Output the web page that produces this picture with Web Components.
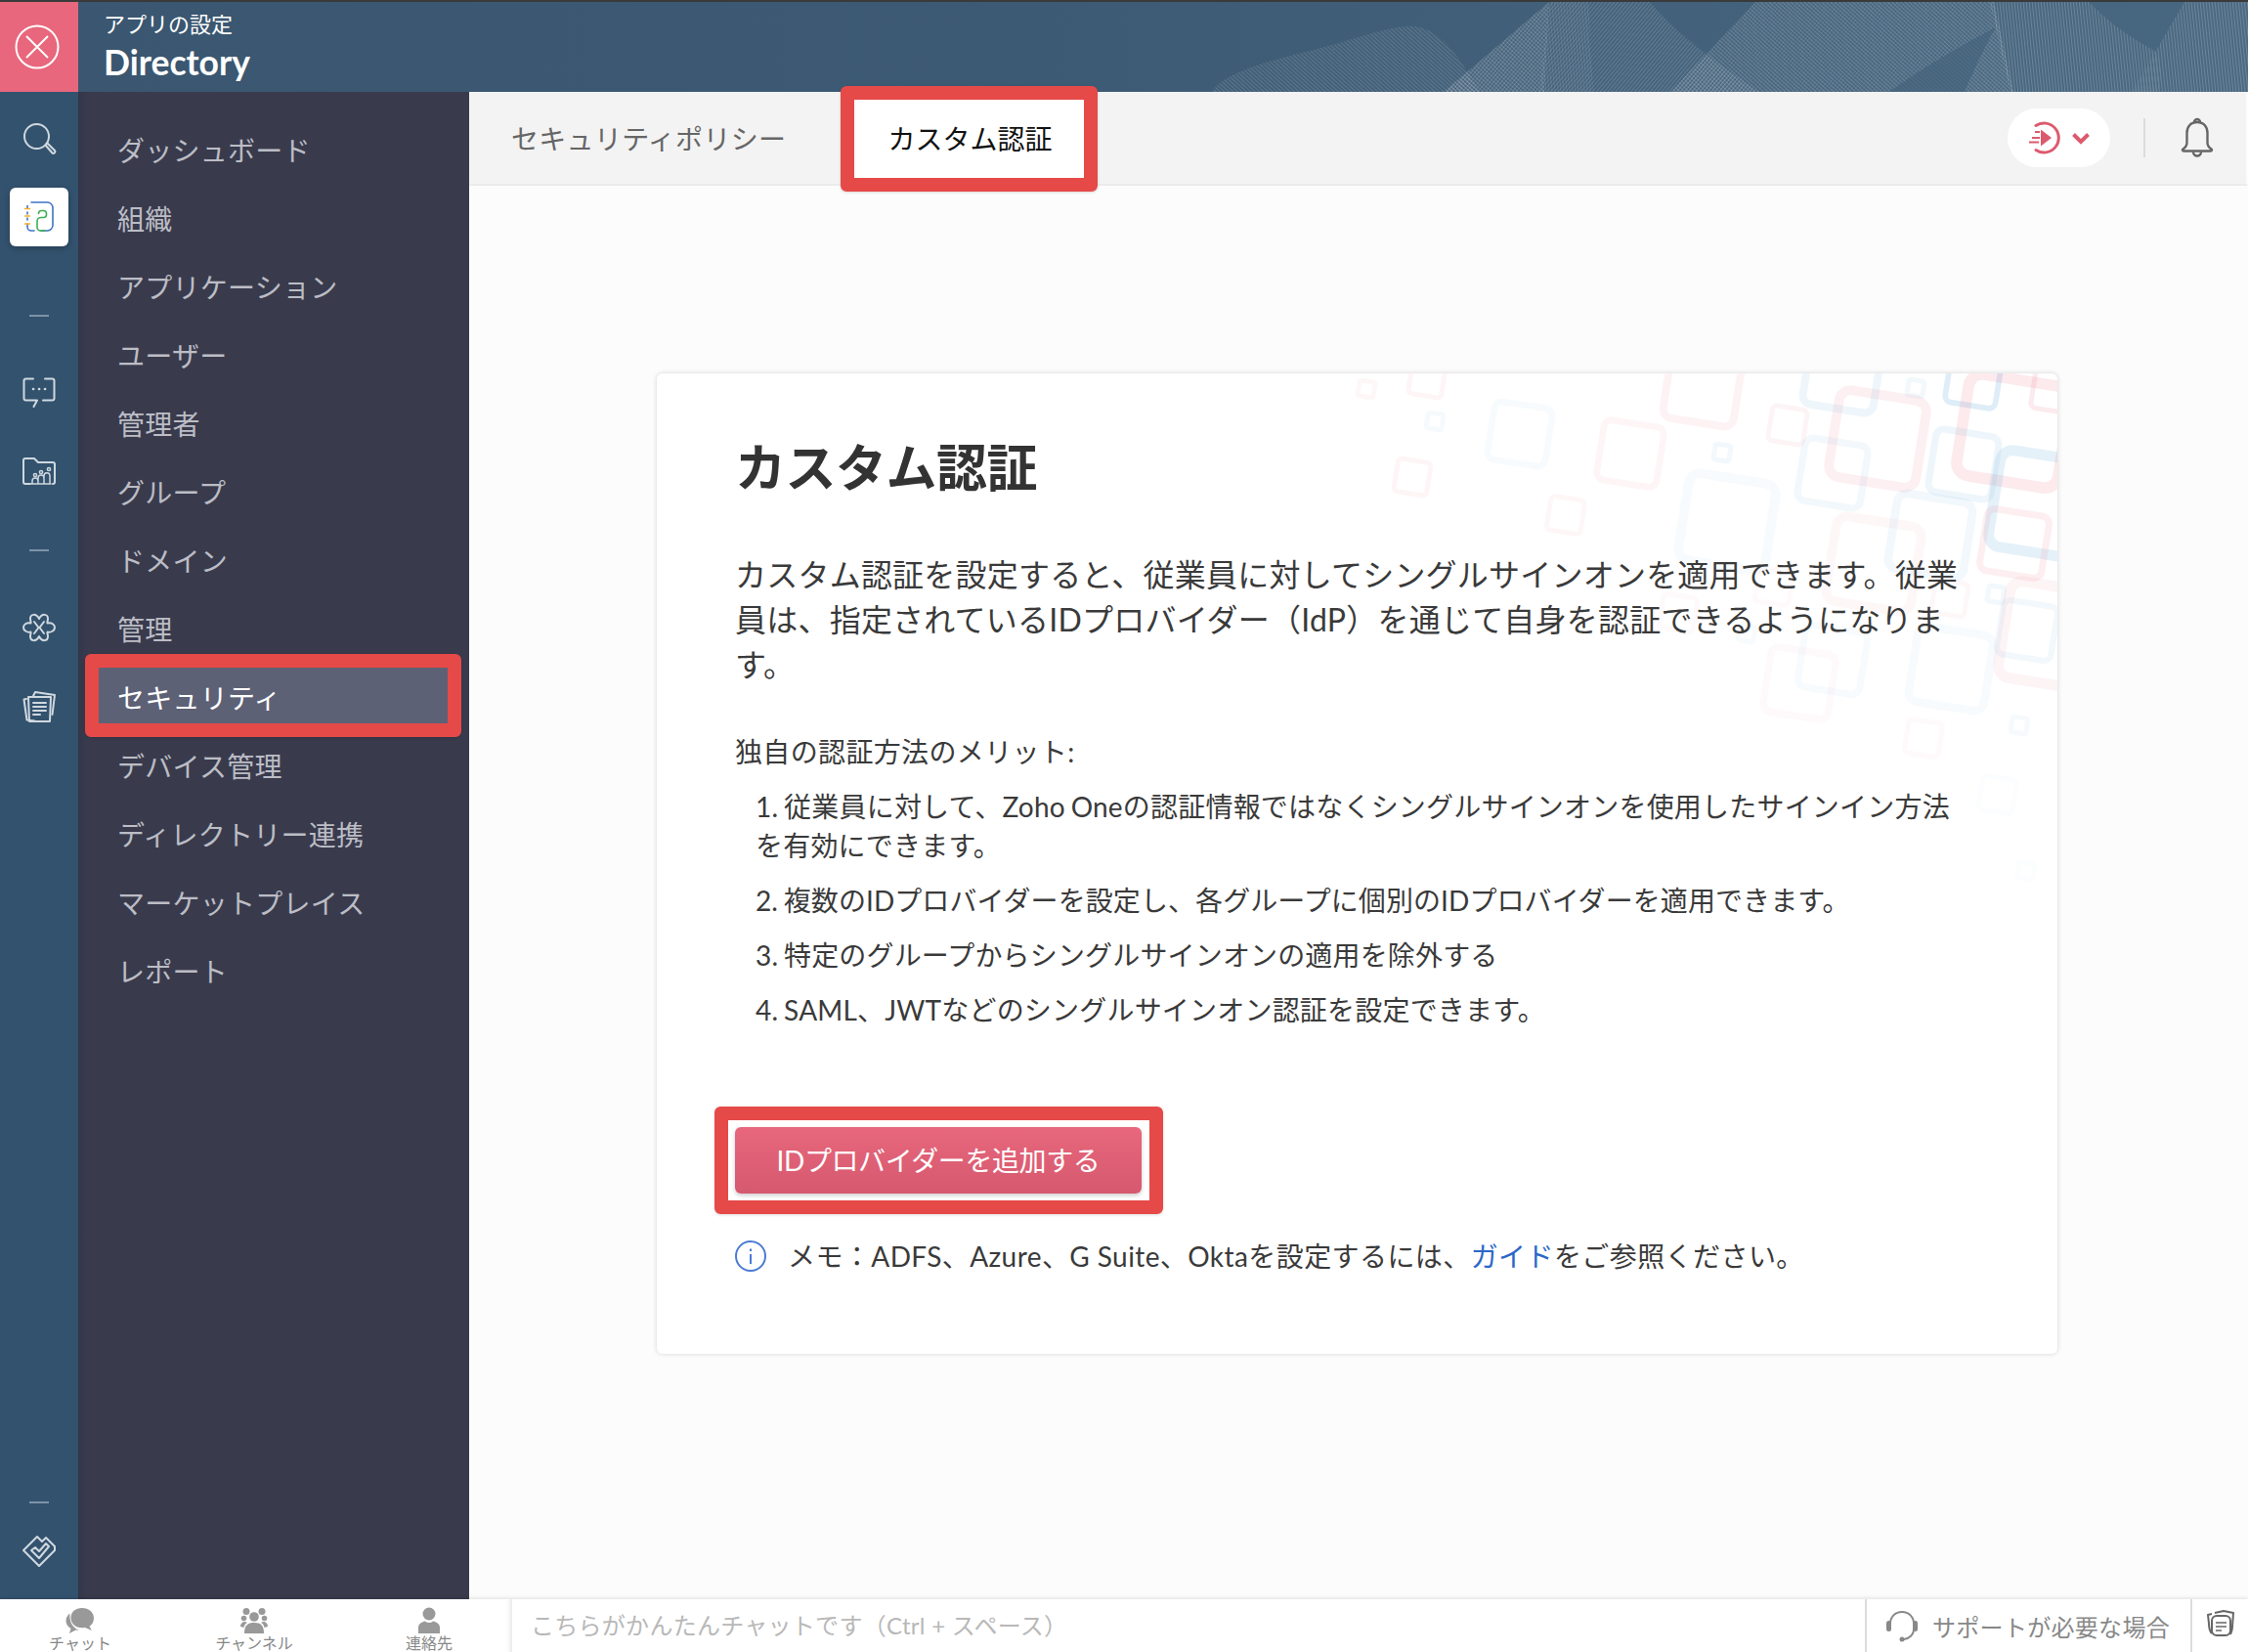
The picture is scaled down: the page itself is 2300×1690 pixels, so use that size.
<!DOCTYPE html>
<html lang="ja">
<head>
<meta charset="utf-8">
<title>Directory</title>
<style>
    html, body { margin: 0; height: 100%; overflow: hidden; background: #fcfcfc; }
    body { font-family: Lato, "Noto Sans CJK JP", sans-serif; color: #3a3a3a; }
</style>
</head>
<body>
<app-shell></app-shell>

<script>
const FONT = `Lato, "Noto Sans CJK JP", sans-serif`;

// red annotation frame laid over whatever it wraps
class RedMark extends HTMLElement {
    constructor() {
        super();
        this.attachShadow({ mode: "open" }).innerHTML = `
            <style>
                :host { display: block; position: relative; }
                .frame {
                    position: absolute;
                    top: var(--t, -14px); right: var(--r, -14px); bottom: var(--b, -14px); left: var(--l, -14px);
                    border: 14px solid #e54a48;
                    border-radius: 6px;
                    box-shadow: 0 1px 3px rgba(0,0,0,.15);
                    pointer-events: none;
                }
            </style>
            <slot></slot>
            <div class="frame"></div>
        `;
    }
}

class AppHeader extends HTMLElement {
    constructor() {
        super();
        this.attachShadow({ mode: "open" }).innerHTML = `
            <style>
                :host {
                    display: flex; position: relative; height: 92px; overflow: hidden;
                    background: linear-gradient(90deg, #3a5670 0%, #3d5a74 45%, #486780 100%);
                    color: #fff;
                }
                .close { width: 80px; flex: none; background: #e8677c; display: flex; align-items: center; justify-content: center; padding-right: 4px; box-sizing: border-box; }
                .titles { padding: 10px 0 0 26px; position: relative; z-index: 1; }
                .sup { font-size: 22px; line-height: 26px; }
                .name { font-size: 35.5px; line-height: 42px; font-weight: 700; margin-top: 5px; }
                svg.waves { position: absolute; left: 0; top: 0; }
            </style>
            <div class="close">
                <svg width="46" height="46" viewBox="0 0 46 46" fill="none" stroke="#fff" stroke-width="2">
                    <circle cx="23" cy="23" r="21.5"/><path d="M12 12l22 22M34 12L12 34"/>
                </svg>
            </div>
            <div class="titles">
                <div class="sup">アプリの設定</div>
                <div class="name">Directory</div>
            </div>
            <svg class="waves" width="2300" height="92" viewBox="0 2 2300 92">
                <defs>
                    <pattern id="h1" width="3" height="3" patternUnits="userSpaceOnUse" patternTransform="rotate(-48)"><rect width="1.2" height="3" fill="#fff"/></pattern>
                    <pattern id="h2" width="3" height="3" patternUnits="userSpaceOnUse" patternTransform="rotate(40)"><rect width="1.200" height="3" fill="#fff"/></pattern>
                    <pattern id="h3" width="3" height="3" patternUnits="userSpaceOnUse" patternTransform="rotate(-6)"><rect width="1.200" height="3" fill="#fff"/></pattern>
                </defs>
                <g fill="url(#h1)" opacity=".15">
                    <path d="M1240 94C1250 76 1290 64 1340 52C1390 40 1435 20 1456 29C1480 36 1500 70 1514 94Z"/>
                </g>
                <g fill="url(#h2)" opacity=".17">
                    <path d="M1477 94L1585 2H1688C1720 40 1760 66 1800 94Z"/>
                </g>
                <g fill="url(#h1)" opacity=".17">
                    <path d="M1477 94L1585 2L1580 94Z"/>
                    <path d="M1709 94L1796 2H2040L2060 94H2010C2020 70 2035 40 2042 28C2000 50 1960 74 1933 94Z"/>
                    <path d="M1933 94C1960 74 2000 50 2042 28L2060 94Z" opacity=".35"/>
                </g>
                <g fill="url(#h2)" opacity=".08">
                    <path d="M1709 94L1796 2H2040L2060 94H2010C2020 70 2035 40 2042 28C2000 50 1960 74 1933 94Z"/>
                </g>
                <g fill="url(#h3)" opacity=".2">
                    <path d="M2036 2H2137C2165 30 2190 44 2205 52C2215 70 2210 94 2208 94H2057Z"/>
                    <path d="M2235 2H2300V94H2181Z"/>
                    <path d="M1585 2H1625L1630 94H1575Z" opacity=".5"/>
                </g>
            </svg>
        `;
    }
}

class AppRail extends HTMLElement {
    constructor() {
        super();
        const s = `fill="none" stroke="#cfd8df" stroke-width="2" stroke-linecap="round" stroke-linejoin="round"`;
        this.attachShadow({ mode: "open" }).innerHTML = `
            <style>
                :host {
                    display: flex; flex-direction: column; align-items: center;
                    width: 80px; flex: none; background: #33526e; padding: 18px 0 20px; box-sizing: border-box;
                }
                .i { width: 60px; height: 60px; display: flex; align-items: center; justify-content: center; flex: none; }
                .on { background: #fff; border-radius: 6px; box-shadow: 0 2px 6px rgba(0,0,0,.25); }
                .dash { width: 20px; height: 2px; background: #7d93a6; flex: none; }
                .grow { flex: 1; }
            </style>
            <div class="i">
                <svg width="36" height="36" viewBox="0 0 36 36" ${s}>
                    <circle cx="15.5" cy="15.5" r="12.5"/>
                    <path d="M24.5 24.5l2-2 7.5 7.5a1.4 1.4 0 0 1 0 2l-.5.5a1.4 1.4 0 0 1-2 0z"/>
                </svg>
            </div>
            <div class="i on" style="margin-top:20px">
                <svg width="36" height="36" viewBox="0 0 36 36" fill="none" stroke-width="1.6" stroke-linecap="round">
                    <path stroke="#3f74c4" d="M6 6.500V9M6 13V15M6 19V21M6 25V28a4 4 0 0 0 4 4h3M10 3h17a6 6 0 0 1 5 6v17a6 6 0 0 1-5 6h-7"/>
                    <path stroke="#f0b232" d="M3.500 9.500h5M3.500 17h5M3.500 25h5"/>
                    <path stroke="#3fae55" d="M24 32h-4.500a3.500 3.500 0 0 1-3.500-3.500v-6a4 4 0 0 1 4-4h2.500a3 3 0 0 0 3-3v-1a3 3 0 0 0-3-3h-2a3 3 0 0 0-3 3"/>
                </svg>
            </div>
            <div class="dash" style="margin-top:70px"></div>
            <div class="i" style="margin-top:46px">
                <svg width="36" height="36" viewBox="0 0 36 36" ${s}>
                    <path d="M12 5.500H4.500a2 2 0 0 0-2 2v18a2 2 0 0 0 2 2H16l-3.500 6.500M22 27.500h9.500a2 2 0 0 0 2-2v-18a2 2 0 0 0-2-2H24"/>
                    <path d="M12 16h.1M18 16h.1M24 16h.1" stroke-width="2.600"/>
                </svg>
            </div>
            <div class="i" style="margin-top:22px">
                <svg width="36" height="36" viewBox="0 0 36 36" ${s}>
                    <path d="M9 31H4a2 2 0 0 1-2-2V7a2 2 0 0 1 2-2h9l4 4h15a2 2 0 0 1 2 2v18a2 2 0 0 1-2 2"/>
                    <path stroke-width="1.500" d="M11 31v-3a3 3 0 0 1 6 0v3M17 31v-6a3 3 0 0 1 6 0v6M23 31v-8a3 3 0 0 1 6-.5V31M10 31h20"/>
                    <circle stroke-width="1.500" cx="14" cy="22" r="1.600"/><circle stroke-width="1.500" cx="20" cy="19" r="1.600"/><circle stroke-width="1.500" cx="28" cy="16" r="1.600"/>
                </svg>
            </div>
            <div class="dash" style="margin-top:50px"></div>
            <div class="i" style="margin-top:48px">
                <svg width="36" height="36" viewBox="0 0 36 36" ${s}>
                    <path d="M18 9C15 3 9 4 9 9C9 11 10 12 9.500 13.500C5 12.500 2 15 2 18C2 21 6 23.500 9.500 22.500C10 24 9 25 9 27C9 32 15 33 18 27C21 33 27 32 27 27C27 25 26 24 26.500 22.500C30 23.500 34 21 34 18C34 15 31 12.500 26.500 13.500C26 12 27 11 27 9C27 4 21 3 18 9Z"/>
                    <path d="M13 12l4.500 6-4.500 6M23 12l-4.500 6 4.500 6"/>
                </svg>
            </div>
            <div class="i" style="margin-top:20px">
                <svg width="36" height="36" viewBox="0 0 36 36" ${s} stroke-width="1.800">
                    <path d="M5 11l-2.500.5 3 21 8 1M12 8l2-4 20 3-2.500 20"/>
                    <path d="M7 9h23l-1 25H8z"/>
                    <path d="M12 15h13M12 19h13M12 23h13M12 27h7"/>
                </svg>
            </div>
            <div class="grow"></div>
            <div class="dash"></div>
            <div class="i" style="margin-top:18px">
                <svg width="36" height="36" viewBox="0 0 36 36" ${s}>
                    <path d="M18 34L2 18 16 4l5 5 4-4 9 9v4z"/>
                    <path d="M10 18l8 8 10-12-3-3-7 8-4-4z"/>
                </svg>
            </div>
        `;
    }
}

class NavItem extends HTMLElement {
    constructor() {
        super();
        this.attachShadow({ mode: "open" }).innerHTML = `
            <style>
                :host {
                    display: block; height: 70px; line-height: 72px; margin: 0 14px; padding-left: 26px;
                    font-size: 28px; color: #bcbdc5; letter-spacing: .25px;
                }
                :host([active]) { background: #5d6176; color: #fff; }
            </style>
            <slot></slot>
        `;
    }
}

class SideNav extends HTMLElement {
    constructor() {
        super();
        this.attachShadow({ mode: "open" }).innerHTML = `
            <style>
                :host {
                    display: block; width: 400px; flex: none; padding-top: 24px; box-sizing: border-box;
                    background: linear-gradient(90deg, #33354a 0, #393b4d 10px);
                }
                red-mark { --t: -9px; --b: -6px; --l: 7px; --r: 8px; }
            </style>
            <nav-item>ダッシュボード</nav-item>
            <nav-item>組織</nav-item>
            <nav-item>アプリケーション</nav-item>
            <nav-item>ユーザー</nav-item>
            <nav-item>管理者</nav-item>
            <nav-item>グループ</nav-item>
            <nav-item>ドメイン</nav-item>
            <nav-item>管理</nav-item>
            <red-mark><nav-item active>セキュリティ</nav-item></red-mark>
            <nav-item>デバイス管理</nav-item>
            <nav-item>ディレクトリー連携</nav-item>
            <nav-item>マーケットプレイス</nav-item>
            <nav-item>レポート</nav-item>
        `;
    }
}

class TabBar extends HTMLElement {
    constructor() {
        super();
        this.attachShadow({ mode: "open" }).innerHTML = `
            <style>
                :host {
                    display: flex; align-items: center; height: 96px; box-sizing: border-box; flex: none;
                    background: #f3f3f3; border-bottom: 2px solid #ebebeb; border-right: 2px solid #fcfcfc;
                    font-size: 28px; color: #666;
                }
                .tab { padding-left: 43px; width: 394px; box-sizing: border-box; letter-spacing: .3px; }
                red-mark { --t: -6px; --b: -8px; }
                .active { width: 235px; height: 94px; background: #fff; color: #111; display: flex; align-items: center; justify-content: center; padding-left: 2px; box-sizing: border-box; }
                .grow { flex: 1; }
                .pill { width: 105px; height: 60px; border-radius: 30px; background: #fff; display: flex; align-items: center; justify-content: center; gap: 11px; }
                .sep { width: 2px; height: 40px; background: #dcdcdc; margin: 0 36px 0 34px; }
                .bell { margin-right: 33px; display: block; }
            </style>
            <div class="tab">セキュリティポリシー</div>
            <red-mark><div class="active">カスタム認証</div></red-mark>
            <div class="grow"></div>
            <div class="pill">
                <svg width="34" height="34" viewBox="0 0 34 34" fill="none" stroke="#dc5a6e" stroke-width="3">
                    <path d="M8 4.500A15 15 0 1 1 8 29.500" stroke-linecap="round"/>
                    <path d="M13 8.500l11 8.500-11 8.500z" fill="#dc5a6e" stroke="none"/>
                    <path d="M7 11h5M4 17h8M1 21.500h10" stroke-width="2"/>
                </svg>
                <svg width="18" height="13" viewBox="0 0 18 13" fill="none" stroke="#dc5a6e" stroke-width="4"><path d="M1.500 2.500L9 10l7.500-7.500"/></svg>
            </div>
            <div class="sep"></div>
            <svg class="bell" width="34" height="42" viewBox="0 0 34 42" fill="none" stroke="#666" stroke-width="2.400" stroke-linejoin="round">
                <path d="M17 5c-7 0-10.500 5-10.500 11v10c0 3-1.500 5-4 6.500-1 .8-.5 2 .8 2h27.400c1.300 0 1.800-1.200.8-2-2.500-1.500-4-3.500-4-6.500V16C27.500 10 24 5 17 5z"/>
                <path d="M14 5a3 3 0 0 1 6 0M13 35.500a4 4 0 0 0 8 0"/>
            </svg>
        `;
    }
}

class AuthCard extends HTMLElement {
    constructor() {
        super();
        // decoration squares behind the text: x, y, size, colour, alpha
        const squares = [
            [1398,398,16,"p",.07],[1460,388,34,"p",.08],[1468,431,16,"b",.07],[1555,444,60,"b",.06],[1445,488,34,"p",.08],
            [1668,464,62,"p",.08],[1742,396,73,"p",.1],[1762,463,16,"b",.1],[1829,435,36,"p",.09],[1885,382,73,"b",.13],
            [1921,449,90,"p",.12],[1875,484,65,"b",.1],[1960,397,16,"b",.1],[2019,389,52,"b",.25],[2060,441,105,"p",.17],
            [2100,400,40,"p",.16],[2009,475,65,"b",.13],[2090,516,100,"b",.2],[2061,556,64,"p",.13],[1975,548,78,"b",.1],
            [1767,534,90,"b",.05],[1602,527,35,"p",.07],[1917,577,88,"p",.07],[1995,612,34,"p",.07],[2042,608,16,"b",.1],
            [2074,645,56,"b",.1],[2100,650,100,"p",.09],[1875,675,64,"b",.06],[1841,699,67,"p",.05],[1996,684,78,"b",.06],
            [1968,755,35,"p",.05],[2066,742,16,"b",.07],[2044,813,35,"b",.025],[2073,891,16,"b",.03],[1717,627,35,"p",.05],
            [1787,648,16,"b",.05],[1815,600,35,"p",.05]
        ].map(([x, y, d, c, a]) => {
            const col = c === "p" ? "232,90,115" : "80,160,215";
            const sw = Math.max(5, d * 0.11);
            return `<rect x="${x - d / 2}" y="${y - d / 2}" width="${d}" height="${d}" rx="${d * 0.13}" fill="none" stroke="rgba(${col},${a * 0.75})" stroke-width="${sw}" transform="rotate(9 ${x} ${y})"/>`;
        }).join("");

        this.attachShadow({ mode: "open" }).innerHTML = `
            <style>
                :host {
                    display: block; position: relative; overflow: hidden; width: 1433px; height: 1003px; box-sizing: border-box; flex: none;
                    margin: 192px 0 0 192px; padding: 66px 95px 0 80px;
                    background: #fff; border-radius: 6px; box-shadow: 0 0 5px rgba(0,0,0,.16);
                    color: #3a3a3a;
                }
                svg.deco { position: absolute; left: 0; top: 0; }
                .body { position: relative; }
                h1 { margin: 0; font-size: 52px; line-height: 60px; font-weight: 700; color: #333; letter-spacing: -.5px; }
                p.lead { margin: 57px 0 0; font-size: 32px; line-height: 46px; letter-spacing: .22px; }
                p.sub { margin: 46px 0 0; font-size: 28px; line-height: 40px; letter-spacing: .35px; }
                ol { list-style: none; margin: 16px 0 0; padding: 0 0 0 21px; font-size: 28px; line-height: 40px; letter-spacing: .2px; word-spacing: -1.5px; }
                li + li { margin-top: 16px; }
                red-mark { width: 416px; margin-top: 100px; --t: -21px; --b: -21px; --l: -21px; --r: -22px; }
                .btn {
                    height: 68px; line-height: 68px; text-align: center; border-radius: 6px; color: #fff; font-size: 28px; letter-spacing: -.4px;
                    background: linear-gradient(180deg, #e8677c, #d5596f); box-shadow: 0 2px 4px rgba(0,0,0,.2);
                }
                .note { display: flex; align-items: center; margin-top: 44px; font-size: 28px; line-height: 40px; letter-spacing: .42px; }
                .note svg { margin-right: 22px; flex: none; }
                a { color: #2b68c9; text-decoration: none; }
            </style>
            <svg class="deco" width="1433" height="1003" viewBox="672 382 1433 1003">${squares}</svg>
            <div class="body">
                <h1>カスタム認証</h1>
                <p class="lead">カスタム認証を設定すると、従業員に対してシングルサインオンを適用できます。従業員は、指定されているIDプロバイダー（IdP）を通じて自身を認証できるようになります。</p>
                <p class="sub">独自の認証方法のメリット:</p>
                <ol>
                    <li>1. 従業員に対して、Zoho Oneの認証情報ではなくシングルサインオンを使用したサインイン方法を有効にできます。</li>
                    <li style="letter-spacing:.08px">2. 複数のIDプロバイダーを設定し、各グループに個別のIDプロバイダーを適用できます。</li>
                    <li style="letter-spacing:.16px">3. 特定のグループからシングルサインオンの適用を除外する</li>
                    <li>4. SAML、JWTなどのシングルサインオン認証を設定できます。</li>
                </ol>
                <red-mark><div class="btn">IDプロバイダーを追加する</div></red-mark>
                <div class="note">
                    <svg width="32" height="32" viewBox="0 0 32 32" fill="none" stroke="#4a7bd6" stroke-width="2"><circle cx="16" cy="16" r="15"/><path d="M16 14v10M16 8.500v2.500"/></svg>
                    <span>メモ：ADFS、Azure、G Suite、Oktaを設定するには、<a>ガイド</a>をご参照ください。</span>
                </div>
            </div>
        `;
    }
}

class BottomBar extends HTMLElement {
    constructor() {
        super();
        this.attachShadow({ mode: "open" }).innerHTML = `
            <style>
                :host {
                    display: flex; height: 54px; flex: none; background: #fff; position: relative; overflow: hidden;
                    box-shadow: 0 -1px 4px rgba(0,0,0,.12);
                }
                .tabs { width: 522px; display: flex; flex: none; }
                .t { position: absolute; width: 120px; top: 8px; text-align: center; font-size: 16px; line-height: 20px; color: #888; }
                .t svg { display: block; margin: 0 auto -1px; }
                .input { flex: 1; padding-left: 19px; font-size: 24px; letter-spacing: .28px; line-height: 54px; color: #b8b8b8; border-left: 2px solid #eee; box-shadow: -2px 0 3px rgba(0,0,0,.05); }
                .support { display: flex; align-items: center; width: 333px; box-sizing: border-box; border-left: 2px solid #ddd; padding-left: 19px; color: #888; font-size: 24px; letter-spacing: .3px; }
                .support svg { margin-right: 14px; }
                .notes { width: 59px; box-sizing: border-box; border-left: 2px solid #ddd; display: flex; align-items: flex-start; justify-content: center; padding-top: 11px; }
            </style>
            <div class="tabs">
                <div class="t" style="left:22px">
                    <svg width="30" height="28" viewBox="0 0 30 28" fill="#999"><path d="M17 1c7 0 12 4.500 12 10.500 0 3.500-1.700 6.500-4.500 8.300L27 24l-7-3c-1 .2-2 .3-3 .3C10 21.300 5.500 16.800 5.500 11S10 1 17 1z"/><path d="M4.500 6.500C2 8.500.5 11 .5 14c0 3.500 2 6.500 5 8L4 27l6.500-3.500c1.300.2 2.500.2 3.500 0-6.500-1.500-10.500-9-9.500-17z"/></svg>
                    チャット
                </div>
                <div class="t" style="left:200px">
                    <svg width="28" height="28" viewBox="0 0 28 28" fill="#999"><circle cx="6" cy="4.500" r="3.500"/><circle cx="22" cy="4.500" r="3.500"/><circle cx="14" cy="10" r="4.800"/><circle cx="3.500" cy="11.500" r="2.800"/><circle cx="24.500" cy="11.500" r="2.800"/><path d="M4 27c0-8 3-11 10-11s10 3 10 11z"/><path d="M0 20c0-3 2-5 5-5l2 1c-2 1-3 2.500-3.500 5zM28 20c0-3-2-5-5-5l-2 1c2 1 3 2.500 3.500 5z"/></svg>
                    チャンネル
                </div>
                <div class="t" style="left:379px">
                    <svg width="24" height="28" viewBox="0 0 24 28" fill="#999"><circle cx="12" cy="7" r="6.500"/><path d="M1 27v-6c0-4 4-6 7-6.500 2.500 2 5.500 2 8 0 3 .5 7 2.500 7 6.500v6z"/></svg>
                    連絡先
                </div>
            </div>
            <div class="input">こちらがかんたんチャットです（Ctrl + スペース）</div>
            <div class="support">
                <svg width="34" height="34" viewBox="0 0 34 34" fill="none" stroke="#888" stroke-width="2">
                    <path d="M5 15C5 8 10 3 17 3s12 5 12 12M29 21c0 5-4 9-10 10"/>
                    <rect x="1" y="12" width="5" height="11" rx="2.500" fill="#888" stroke="none"/><rect x="28" y="12" width="5" height="11" rx="2.500" fill="#888" stroke="none"/>
                    <circle cx="17" cy="31" r="2.500" fill="#888" stroke="none"/>
                </svg>
                サポートが必要な場合
            </div>
            <div class="notes">
                <svg width="30" height="28" viewBox="0 0 30 28" fill="none" stroke="#666" stroke-width="2" stroke-linejoin="round">
                    <path d="M6 4l-4 1 1 9c0 4 1 8 3 10M9 3l9-2 10 2-1 14c0 3-1 6-2 8"/>
                    <rect x="6" y="6" width="19" height="20" rx="5"/>
                    <path d="M10 13h11M10 17h11M10 21h6" stroke-width="1.500"/>
                </svg>
            </div>
        `;
    }
}

class AppShell extends HTMLElement {
    constructor() {
        super();
        this.attachShadow({ mode: "open" }).innerHTML = `
            <style>
                :host {
                    display: flex; flex-direction: column; height: 100vh; width: 100vw;
                    border-top: 2px solid #3a3a3a; box-sizing: border-box;
                    font-family: ${FONT};
                }
                .main { flex: 1; display: flex; min-height: 0; }
                .content { flex: 1; display: flex; flex-direction: column; background: #fcfcfc; min-width: 0; }
            </style>
            <app-header></app-header>
            <div class="main">
                <app-rail></app-rail>
                <side-nav></side-nav>
                <div class="content">
                    <tab-bar></tab-bar>
                    <auth-card></auth-card>
                </div>
            </div>
            <bottom-bar></bottom-bar>
        `;
    }
}

customElements.define("red-mark", RedMark);
customElements.define("app-header", AppHeader);
customElements.define("app-rail", AppRail);
customElements.define("nav-item", NavItem);
customElements.define("side-nav", SideNav);
customElements.define("tab-bar", TabBar);
customElements.define("auth-card", AuthCard);
customElements.define("bottom-bar", BottomBar);
customElements.define("app-shell", AppShell);
</script>
</body>
</html>
